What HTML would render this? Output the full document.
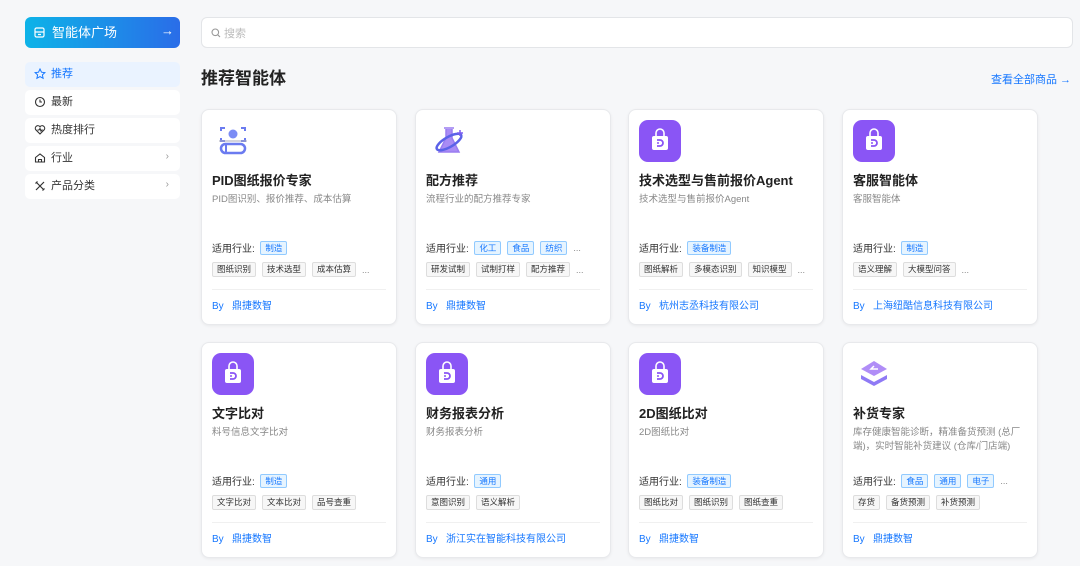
<!DOCTYPE html>
<html><head><meta charset="utf-8"><style>
*{margin:0;padding:0;box-sizing:border-box}
body{width:1080px;height:566px;background:#f6f7f9;font-family:"Liberation Sans","Noto Sans CJK SC",sans-serif;position:relative;overflow:hidden;color:#222}
.btn{position:absolute;left:25px;top:17px;width:155px;height:31px;border-radius:6px;background:linear-gradient(90deg,#0db3e8,#2a6de8);color:#fff;font-size:13px}
.btn span{position:absolute;left:27px;top:7px;line-height:18px}
.nav{position:absolute;left:25px;width:155px;height:25px;background:#fff;border-radius:5px;font-size:11px;color:#333}
.nav.on{background:#eaf3ff;color:#1677ff}
.nav .ic{position:absolute;left:9px;top:6px;width:12px;height:12px}
.nav .t{position:absolute;left:26px;top:5px;line-height:14px}
.nav .ch{position:absolute;right:11px;top:5px;color:#999;font-size:10px}
.search{position:absolute;left:201px;top:17px;width:872px;height:31px;background:#fff;border:1px solid #e3e5e8;border-radius:6px;font-size:11px;color:#bbb}
h1{position:absolute;left:201px;top:68px;font-size:17px;line-height:22px;font-weight:bold;color:#222}
.all{position:absolute;left:991px;top:71px;font-size:11px;color:#1677ff}
.card{position:absolute;width:196px;height:216px;background:#fff;border:1px solid #e8e9ec;border-radius:8px;box-shadow:0 1px 3px rgba(0,0,0,.06)}
.card .icon{position:absolute;left:10px;top:10px;width:42px;height:42px}
.card .ti{position:absolute;left:10px;top:62px;font-size:13px;line-height:18px;font-weight:bold;color:#222;white-space:nowrap}
.card .de{position:absolute;left:10px;top:83px;width:178px;font-size:9.5px;line-height:14px;color:#888}
.card .ind{position:absolute;left:10px;top:130px;font-size:10px;color:#333;display:flex;align-items:center;white-space:nowrap}
.bt{display:inline-block;height:14px;line-height:12px;padding:0 4px;font-size:8.5px;color:#1677ff;background:#e6f4ff;border:1px solid #91caff;border-radius:2px;margin-right:6px}
.gt{display:inline-block;height:15px;line-height:13px;padding:0 4px;font-size:8.5px;color:#333;background:#f7f7f7;border:1px solid #ddd;border-radius:2px;margin-right:6px}
.dots{color:#888;font-size:9px}
.card .tg{position:absolute;left:10px;top:152px;display:flex;align-items:center;white-space:nowrap}
.card .hr{position:absolute;left:10px;right:10px;top:179px;border-top:1px solid #f0f0f0}
.card .by{position:absolute;left:10px;top:190px;font-size:10px;line-height:14px;color:#1677ff;white-space:nowrap}
</style></head><body>
<div class="btn"><svg style="position:absolute;left:9px;top:10px" width="11" height="11" viewBox="0 0 11 11" fill="none" stroke="#fff" stroke-width="1.2"><rect x="1" y="1" width="9" height="9" rx="1.5"/><path d="M1 5h9M4 7.5h3"/></svg><span>智能体广场</span><span style="left:136px;top:5px;font-size:13px">→</span></div>

<div class="nav on" style="top:62px"><svg class="ic" viewBox="0 0 12 12" fill="none" stroke="#1677ff" stroke-width="1"><path d="M6 1l1.5 3.2 3.4.4-2.5 2.3.7 3.4L6 8.6 2.9 10.3l.7-3.4L1.1 4.6l3.4-.4z"/></svg><span class="t">推荐</span></div>
<div class="nav" style="top:90px"><svg class="ic" viewBox="0 0 12 12" fill="none" stroke="#333" stroke-width="1.1"><circle cx="6" cy="6" r="4.5"/><path d="M6 3.5V6h2"/></svg><span class="t">最新</span></div>
<div class="nav" style="top:118px"><svg class="ic" viewBox="0 0 12 12" fill="none" stroke="#333" stroke-width="1.1"><path d="M6 10L1.8 5.8A2.4 2.4 0 0 1 6 2.8a2.4 2.4 0 0 1 4.2 3z"/><path d="M3.5 6h1.5l1-1.5 1 2.5.8-1h1"/></svg><span class="t">热度排行</span></div>
<div class="nav" style="top:146px"><svg class="ic" viewBox="0 0 12 12" fill="none" stroke="#333" stroke-width="1.1"><path d="M1.5 5.5L6 2l4.5 3.5V10h-9z"/><path d="M4.5 10V7.5h3V10"/></svg><span class="t">行业</span><span class="ch">›</span></div>
<div class="nav" style="top:174px"><svg class="ic" viewBox="0 0 12 12" fill="none" stroke="#333" stroke-width="1.2"><path d="M2 2l8 8M10 2L2 10M1.5 3.5l2-2M8.5 10.5l2-2"/></svg><span class="t">产品分类</span><span class="ch">›</span></div>

<div class="search"><svg style="position:absolute;left:9px;top:10px" width="10" height="10" viewBox="0 0 10 10" fill="none" stroke="#999" stroke-width="1.1"><circle cx="4.3" cy="4.3" r="3.3"/><path d="M6.8 6.8L9 9"/></svg><span style="position:absolute;left:22px;top:7px">搜索</span></div>
<h1>推荐智能体</h1>
<div class="all">查看全部商品 →</div>

<div class="card" style="left:201px;top:109px">
<svg class="icon" viewBox="0 0 42 42" fill="none"><path d="M13 8h-4v3M29 8h4v3M13 21h-4v-3M29 21h4v-3" stroke="#6b7bf0" stroke-width="2"/><circle cx="21" cy="14" r="4.5" fill="#7b8cf5"/><path d="M7 21h28" stroke="#aab" stroke-width="1"/><rect x="9" y="24" width="24" height="9" rx="4.5" stroke="#6b7bf0" stroke-width="2.5"/><path d="M14 24v9" stroke="#6b7bf0" stroke-width="2"/></svg>
<div class="ti">PID图纸报价专家</div><div class="de">PID图识别、报价推荐、成本估算</div>
<div class="ind">适用行业:&nbsp;&nbsp;<span class="bt">制造</span></div>
<div class="tg"><span class="gt">图纸识别</span><span class="gt">技术选型</span><span class="gt">成本估算</span><span class="dots">...</span></div>
<div class="hr"></div><div class="by">By&nbsp;&nbsp;&nbsp;鼎捷数智</div></div>

<div class="card" style="left:415px;top:109px">
<svg class="icon" viewBox="0 0 42 42" fill="none"><path d="M18 8h10M20 9v9l-7 14h20l-7-14V9" fill="#a98bf5" stroke="#9a7df0" stroke-width="1.5"/><ellipse cx="23" cy="22" rx="14" ry="5" transform="rotate(-30 23 22)" stroke="#5b62e8" stroke-width="2.5"/><path d="M34 10v6M31 13h6" stroke="#7a5cf0" stroke-width="1.5"/></svg>
<div class="ti">配方推荐</div><div class="de">流程行业的配方推荐专家</div>
<div class="ind">适用行业:&nbsp;&nbsp;<span class="bt">化工</span><span class="bt">食品</span><span class="bt">纺织</span><span class="dots">...</span></div>
<div class="tg"><span class="gt">研发试制</span><span class="gt">试制打样</span><span class="gt">配方推荐</span><span class="dots">...</span></div>
<div class="hr"></div><div class="by">By&nbsp;&nbsp;&nbsp;鼎捷数智</div></div>

<div class="card" style="left:628px;top:109px">
<svg class="icon" viewBox="0 0 42 42"><rect width="42" height="42" rx="9" fill="#8a55f5"/><path d="M17 16v-3a4 4 0 0 1 8 0v3" fill="none" stroke="#fff" stroke-width="1.6"/><rect x="13" y="16" width="16" height="14" rx="2" fill="#fff"/><path d="M18 20h3a3 3 0 0 1 0 6h-3" fill="none" stroke="#8a55f5" stroke-width="1.8"/><circle cx="19" cy="23" r="1" fill="#8a55f5"/></svg>
<div class="ti">技术选型与售前报价Agent</div><div class="de">技术选型与售前报价Agent</div>
<div class="ind">适用行业:&nbsp;&nbsp;<span class="bt">装备制造</span></div>
<div class="tg"><span class="gt">图纸解析</span><span class="gt">多模态识别</span><span class="gt">知识模型</span><span class="dots">...</span></div>
<div class="hr"></div><div class="by">By&nbsp;&nbsp;&nbsp;杭州志丞科技有限公司</div></div>

<div class="card" style="left:842px;top:109px">
<svg class="icon" viewBox="0 0 42 42"><rect width="42" height="42" rx="9" fill="#8a55f5"/><path d="M17 16v-3a4 4 0 0 1 8 0v3" fill="none" stroke="#fff" stroke-width="1.6"/><rect x="13" y="16" width="16" height="14" rx="2" fill="#fff"/><path d="M18 20h3a3 3 0 0 1 0 6h-3" fill="none" stroke="#8a55f5" stroke-width="1.8"/><circle cx="19" cy="23" r="1" fill="#8a55f5"/></svg>
<div class="ti">客服智能体</div><div class="de">客服智能体</div>
<div class="ind">适用行业:&nbsp;&nbsp;<span class="bt">制造</span></div>
<div class="tg"><span class="gt">语义理解</span><span class="gt">大模型问答</span><span class="dots">...</span></div>
<div class="hr"></div><div class="by">By&nbsp;&nbsp;&nbsp;上海纽酷信息科技有限公司</div></div>

<div class="card" style="left:201px;top:342px">
<svg class="icon" viewBox="0 0 42 42"><rect width="42" height="42" rx="9" fill="#8a55f5"/><path d="M17 16v-3a4 4 0 0 1 8 0v3" fill="none" stroke="#fff" stroke-width="1.6"/><rect x="13" y="16" width="16" height="14" rx="2" fill="#fff"/><path d="M18 20h3a3 3 0 0 1 0 6h-3" fill="none" stroke="#8a55f5" stroke-width="1.8"/><circle cx="19" cy="23" r="1" fill="#8a55f5"/></svg>
<div class="ti">文字比对</div><div class="de">料号信息文字比对</div>
<div class="ind">适用行业:&nbsp;&nbsp;<span class="bt">制造</span></div>
<div class="tg"><span class="gt">文字比对</span><span class="gt">文本比对</span><span class="gt">品号查重</span></div>
<div class="hr"></div><div class="by">By&nbsp;&nbsp;&nbsp;鼎捷数智</div></div>

<div class="card" style="left:415px;top:342px">
<svg class="icon" viewBox="0 0 42 42"><rect width="42" height="42" rx="9" fill="#8a55f5"/><path d="M17 16v-3a4 4 0 0 1 8 0v3" fill="none" stroke="#fff" stroke-width="1.6"/><rect x="13" y="16" width="16" height="14" rx="2" fill="#fff"/><path d="M18 20h3a3 3 0 0 1 0 6h-3" fill="none" stroke="#8a55f5" stroke-width="1.8"/><circle cx="19" cy="23" r="1" fill="#8a55f5"/></svg>
<div class="ti">财务报表分析</div><div class="de">财务报表分析</div>
<div class="ind">适用行业:&nbsp;&nbsp;<span class="bt">通用</span></div>
<div class="tg"><span class="gt">意图识别</span><span class="gt">语义解析</span></div>
<div class="hr"></div><div class="by">By&nbsp;&nbsp;&nbsp;浙江实在智能科技有限公司</div></div>

<div class="card" style="left:628px;top:342px">
<svg class="icon" viewBox="0 0 42 42"><rect width="42" height="42" rx="9" fill="#8a55f5"/><path d="M17 16v-3a4 4 0 0 1 8 0v3" fill="none" stroke="#fff" stroke-width="1.6"/><rect x="13" y="16" width="16" height="14" rx="2" fill="#fff"/><path d="M18 20h3a3 3 0 0 1 0 6h-3" fill="none" stroke="#8a55f5" stroke-width="1.8"/><circle cx="19" cy="23" r="1" fill="#8a55f5"/></svg>
<div class="ti">2D图纸比对</div><div class="de">2D图纸比对</div>
<div class="ind">适用行业:&nbsp;&nbsp;<span class="bt">装备制造</span></div>
<div class="tg"><span class="gt">图纸比对</span><span class="gt">图纸识别</span><span class="gt">图纸查重</span></div>
<div class="hr"></div><div class="by">By&nbsp;&nbsp;&nbsp;鼎捷数智</div></div>

<div class="card" style="left:842px;top:342px">
<svg class="icon" viewBox="0 0 42 42"><path d="M21 8L8 16l13 7 13-7z" fill="#b08df7"/><path d="M25 16h-7l3-3" fill="none" stroke="#fff" stroke-width="1.5"/><path d="M8 22l13 7 13-7v4l-13 7-13-7z" fill="#8f7af5"/></svg>
<div class="ti">补货专家</div><div class="de">库存健康智能诊断，精准备货预测 (总厂端)，实时智能补货建议 (仓库/门店端)</div>
<div class="ind">适用行业:&nbsp;&nbsp;<span class="bt">食品</span><span class="bt">通用</span><span class="bt">电子</span><span class="dots">...</span></div>
<div class="tg"><span class="gt">存货</span><span class="gt">备货预测</span><span class="gt">补货预测</span></div>
<div class="hr"></div><div class="by">By&nbsp;&nbsp;&nbsp;鼎捷数智</div></div>
</body></html>
